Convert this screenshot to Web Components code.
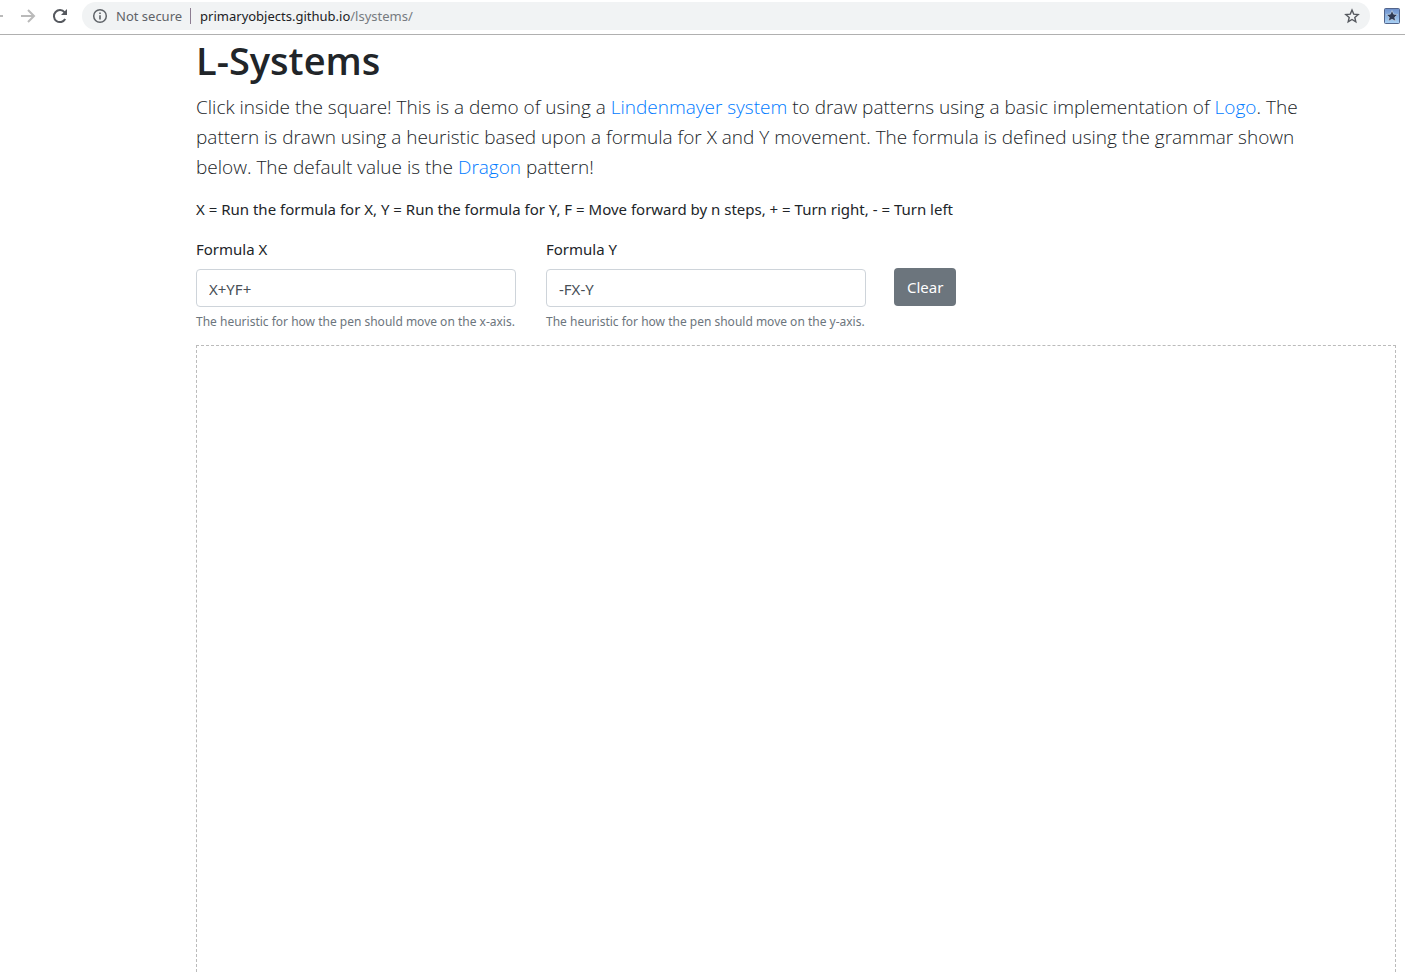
<!DOCTYPE html>
<html lang="en">
<head>
<meta charset="utf-8">
<meta name="viewport" content="width=device-width, initial-scale=1">
<title>L-Systems</title>
<style>
  html, body { margin: 0; height: 100%; }
  body { background: #fff; color: #212529; font-family: "Noto Sans", "Open Sans", sans-serif; font-size: 15px; line-height: 24px; }
</style>
</head>
<body>
<lsystem-app></lsystem-app>

<template id="app-tpl">
  <style>
    :host { display: flex; flex-direction: column; height: 100vh; overflow: hidden; }
    main { flex: 1; display: flex; flex-direction: column; padding: 1px 9px 0 196px; min-height: 0; }
    h1 { margin: 0 0 8px; font-family: "Open Sans", sans-serif; font-size: 38px; line-height: 48px; font-weight: 600; }
    p { margin: 0 0 16px; max-width: 1110px; }
    .lead { margin-bottom: 15px; font-family: "Open Sans", sans-serif; font-size: 19px; line-height: 30px; font-weight: 300; }
    a { color: #007bff; text-decoration: none; }
    form { display: flex; align-items: flex-start; gap: 28px; margin-bottom: 13px; }
    .fields { display: flex; gap: 30px; }
    clear-button { margin-top: 31px; }
    drawing-area { flex: 1; }
  </style>
  <browser-bar></browser-bar>
  <main>
    <h1>L-Systems</h1>
    <p class="lead">Click inside the square! This is a demo of using a <a href="#lindenmayer">Lindenmayer system</a> to draw patterns using a basic implementation of <a href="#logo">Logo</a>. The pattern is drawn using a heuristic based upon a formula for X and Y movement. The formula is defined using the grammar shown below. The default value is the <a href="#dragon">Dragon</a> pattern!</p>
    <p>X = Run the formula for X, Y = Run the formula for Y, F = Move forward by n steps, + = Turn right, - = Turn left</p>
    <form>
      <div class="fields">
        <formula-field label="Formula X" value="X+YF+">The heuristic for how the pen should move on the x-axis.</formula-field>
        <formula-field label="Formula Y" value="-FX-Y">The heuristic for how the pen should move on the y-axis.</formula-field>
      </div>
      <clear-button>Clear</clear-button>
    </form>
    <drawing-area></drawing-area>
  </main>
</template>

<template id="bar-tpl">
  <style>
    :host { display: flex; align-items: center; height: 32px; padding-bottom: 2px; border-bottom: 1px solid #b0b0b0; font-size: 13px; line-height: 20px; overflow: hidden; }
    button { display: flex; flex: none; padding: 0; border: 0; background: none; }
    svg { display: block; }
    nav { display: flex; flex: none; align-items: center; gap: 16px; margin-left: -12px; }
    .address { flex: 1; display: flex; align-items: center; height: 28px; margin: 0 14px; padding: 0 10px; border-radius: 14px; background: #f1f3f4; color: #5f6368; }
    .security { margin: 0 8px; }
    .rule { width: 1px; height: 16px; margin-right: 9px; background: #8d7d92; }
    .url { flex: 1; color: #777b80; }
    .host { color: #202124; }
    .ext { margin-right: 5px; }
  </style>
  <nav>
    <button aria-label="Back"><svg width="16" height="16" viewBox="0 0 16 16" fill="none" stroke="#bababa" stroke-width="2"><path d="M15 8H2M8 2L2 8l6 6"/></svg></button>
    <button aria-label="Forward"><svg width="16" height="16" viewBox="0 0 16 16" fill="none" stroke="#bababa" stroke-width="2"><path d="M1 8h13M8 2l6 6-6 6"/></svg></button>
    <button aria-label="Reload"><svg width="16" height="16" viewBox="0 0 16 16"><path d="M13.2 11A6 6 0 1 1 12.6 4.3" fill="none" stroke="#55585e" stroke-width="2"/><path d="M15 1v6H9z" fill="#55585e"/></svg></button>
  </nav>
  <div class="address">
    <svg width="16" height="16" viewBox="0 0 16 16"><circle cx="8" cy="8" r="6.3" fill="none" stroke="#5f6368" stroke-width="1.5"/><path d="M7.2 4.4h1.6V6H7.2zM7.2 7.2h1.6v4.4H7.2z" fill="#5f6368"/></svg>
    <span class="security">Not secure</span>
    <span class="rule"></span>
    <span class="url"><span class="host">primaryobjects.github.io</span>/lsystems/</span>
    <button aria-label="Bookmark this page"><svg width="16" height="16" viewBox="0 0 16 16"><path d="M8 2l1.7 4.1 4.5.4-3.4 3 1 4.3L8 11.500l-3.800 2.300 1-4.300-3.400-3 4.500-.4z" fill="none" stroke="#55585e" stroke-width="1.400"/></svg></button>
  </div>
  <button class="ext" aria-label="Bookmarks extension"><svg width="16" height="16" viewBox="0 0 16 16"><defs><linearGradient id="g" x2="0" y2="1"><stop stop-color="#6d90cb"/><stop offset="1" stop-color="#a9d2f6"/></linearGradient></defs><rect x=".5" y=".5" width="15" height="15" rx="1" fill="url(#g)" stroke="#52648a"/><path d="M8 2.500l1.700 3.700 4 .4-3 2.700.9 3.900L8 11.200l-3.600 2 .9-3.900-3-2.700 4-.4z" fill="#303a52" stroke="#d5e4f5" stroke-width=".6"/></svg></button>
</template>

<template id="field-tpl">
  <style>
    :host { display: block; width: 320px; }
    label { display: block; margin-bottom: 8px; }
    input { display: block; box-sizing: border-box; width: 100%; height: 38px; margin: 0; padding: 3px 12px 1px; border: 1px solid #ced4da; border-radius: 4px; background: #fff; color: #495057; font: inherit; }
    small { display: block; margin-top: 5px; font-size: 12px; line-height: 20px; color: #6c757d; white-space: nowrap; }
  </style>
  <label for="formula"></label>
  <input id="formula" type="text" aria-describedby="help">
  <small id="help"><slot></slot></small>
</template>

<template id="clear-tpl">
  <style>
    :host { display: block; }
    button { display: block; height: 38px; padding: 0 13px; border: 0; border-radius: 4px; background: #6c757d; color: #fff; font: inherit; }
  </style>
  <button type="button"><slot></slot></button>
</template>

<template id="area-tpl">
  <style>
    :host { display: block; box-sizing: border-box; border: 1px dashed #bbb; border-bottom: 0; overflow: hidden; }
    canvas { display: block; }
  </style>
  <canvas></canvas>
</template>

<script>
  const define = (name, templateId, setup) => customElements.define(name, class extends HTMLElement {
    constructor() {
      super();
      this.attachShadow({ mode: 'open' }).append(document.getElementById(templateId).content.cloneNode(true));
    }
    connectedCallback() { if (setup) setup(this, this.shadowRoot); }
  });
  define('browser-bar', 'bar-tpl');
  define('formula-field', 'field-tpl', (el, root) => {
    root.querySelector('label').textContent = el.getAttribute('label');
    root.querySelector('input').value = el.getAttribute('value');
  });
  define('clear-button', 'clear-tpl');
  define('drawing-area', 'area-tpl');
  define('lsystem-app', 'app-tpl');
</script>
</body>
</html>
